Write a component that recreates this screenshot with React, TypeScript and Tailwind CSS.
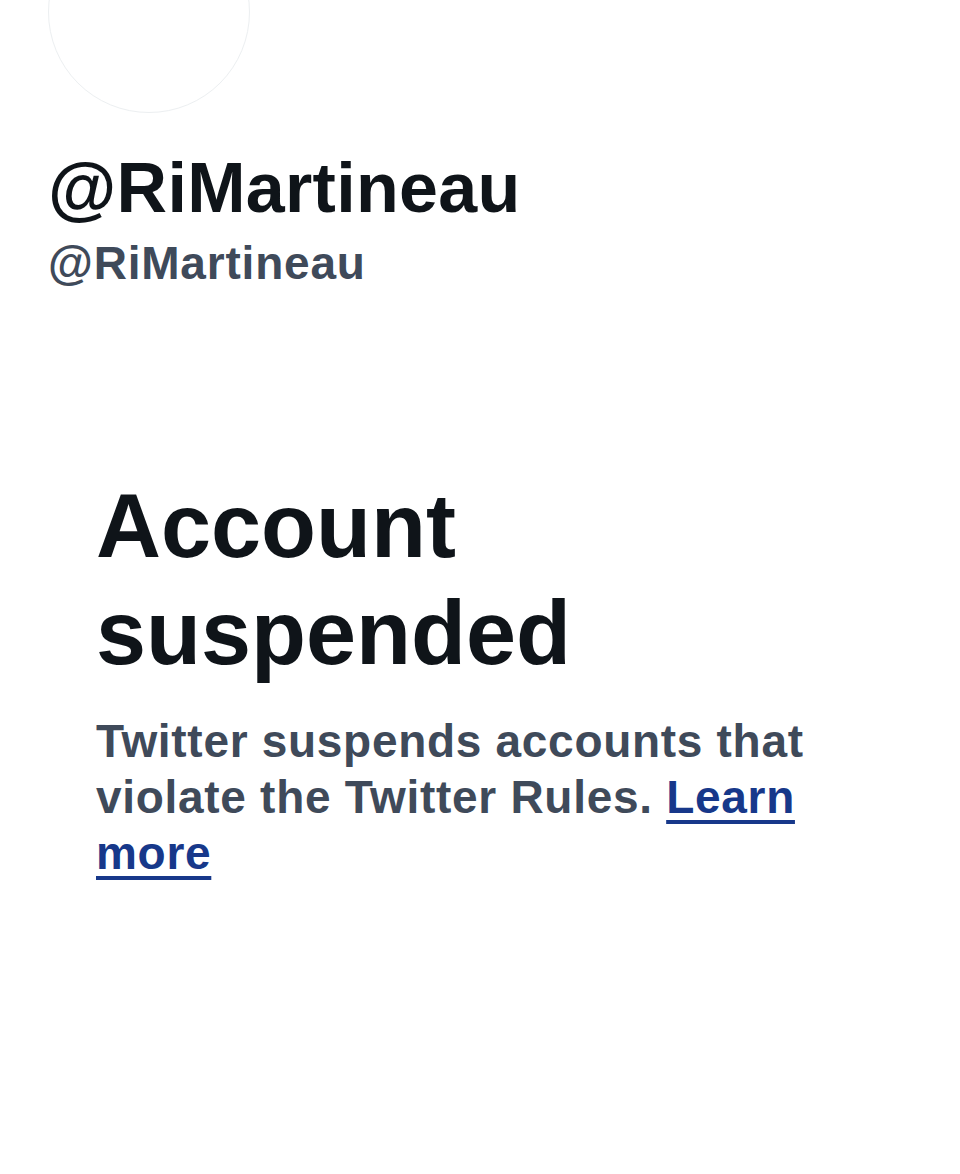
export default function App() {
  return (
    <div
      className="min-h-[1174px] w-[960px] overflow-hidden bg-white"
      style={{ fontFamily: '"Liberation Sans", Arial, sans-serif' }}
    >
      {/* profile header */}
      <div className="px-12">
        <div className="-mt-[89px] h-[202px] w-[202px] rounded-full border border-[#eceff1] bg-white" />
        <h1 className="mt-[35px] text-[70px] font-bold leading-[80px] tracking-[0.3px] text-[#0f1419]">
          @RiMartineau
        </h1>
        <div className="mt-[7px] text-[46px] font-bold leading-[56px] tracking-[0.8px] text-[#3f4a5a]">
          @RiMartineau
        </div>
      </div>

      {/* suspended notice */}
      <div className="mt-[182px] pl-24">
        <h2 className="text-[90px] font-bold leading-[107px] text-[#0f1419]">
          Account
          <br />
          suspended
        </h2>
        <p className="mt-[26px] w-[760px] text-[46px] font-bold leading-[56px] tracking-[0.7px] text-[#3f4a5a]">
          Twitter suspends accounts that violate the Twitter Rules.{" "}
          <a
            href="#"
            className="text-[#17388a] underline decoration-[4px] underline-offset-[7px]"
          >
            Learn more
          </a>
        </p>
      </div>
    </div>
  );
}
